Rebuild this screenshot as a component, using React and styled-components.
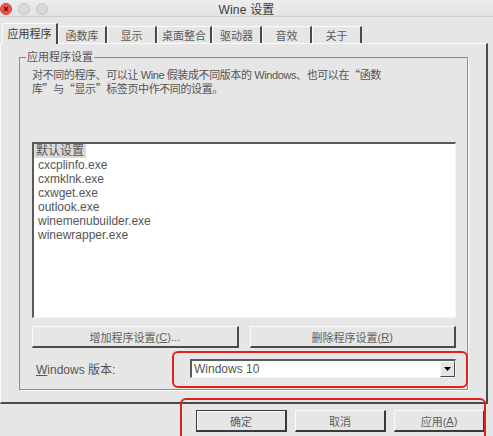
import styled, { createGlobalStyle } from "styled-components";

const FONT = `"Liberation Sans", "Noto Sans CJK SC", sans-serif`;

const GlobalStyle = createGlobalStyle`
  * { box-sizing: border-box; }
  body {
    margin: 0;
    background: #e6e6e6;
    font-family: ${FONT};
  }
`;

const tabs = [
  { label: "应用程序", w: 56, active: true },
  { label: "函数库", w: 49 },
  { label: "显示", w: 50 },
  { label: "桌面整合", w: 55 },
  { label: "驱动器", w: 50 },
  { label: "音效", w: 50 },
  { label: "关于", w: 50 },
];

const programs = [
  "默认设置",
  "cxcplinfo.exe",
  "cxmklnk.exe",
  "cxwget.exe",
  "outlook.exe",
  "winemenubuilder.exe",
  "winewrapper.exe",
];

const App = () => {
  return (
    <Window>
      <GlobalStyle />
      <TitleBar>
        <Lights>
          <Light $close>
            <svg width="6" height="6" viewBox="0 0 6 6">
              <path d="M1 1 L5 5 M5 1 L1 5" stroke="#6b0f0a" strokeWidth="1.3" />
            </svg>
          </Light>
          <Light />
          <Light />
        </Lights>
        <Title>Wine 设置</Title>
      </TitleBar>

      <TabStrip>
        {tabs.map((t) => (
          <Tab key={t.label} $w={t.w} $active={t.active}>
            {t.label}
          </Tab>
        ))}
      </TabStrip>

      <Panel>
        <Group>
          <Legend>应用程序设置</Legend>
          <Description>
            对不同的程序、可以让 Wine 假装成不同版本的 Windows、也可以在<Q>“</Q>函数
            <br />
            库<Q>”</Q>与<Q>“</Q>显示<Q>”</Q>标签页中作不同的设置。
          </Description>
          <ListBox>
            {programs.map((p, i) => (
              <ListItem key={p} $selected={i === 0}>
                <span>{p}</span>
              </ListItem>
            ))}
          </ListBox>
          <ButtonRow>
            <Button>
              增加程序设置(<u>C</u>)...
            </Button>
            <Button>
              删除程序设置(<u>R</u>)
            </Button>
          </ButtonRow>
          <VersionRow>
            <Label>
              <u>W</u>indows 版本:
            </Label>
            <Combo>
              <ComboValue>Windows 10</ComboValue>
              <ComboArrow>
                <svg width="7" height="4" viewBox="0 0 7 4">
                  <path d="M0 0 H7 L3.5 4 Z" fill="#000" />
                </svg>
              </ComboArrow>
            </Combo>
          </VersionRow>
        </Group>
      </Panel>

      <Footer>
        <DialogButton $default>确定</DialogButton>
        <DialogButton>取消</DialogButton>
        <DialogButton>
          应用(<u>A</u>)
        </DialogButton>
      </Footer>

      <Highlight style={{ left: 172, top: 351, width: 296, height: 37 }} />
      <Highlight style={{ left: 180, top: 398, width: 306, height: 48 }} />
    </Window>
  );
};
export default App;

const Window = styled.div`
  position: relative;
  width: 493px;
  height: 436px;
  overflow: hidden;
  background: #e6e6e6;
  color: #555;
`;
const TitleBar = styled.div`
  display: grid;
  grid-template-columns: 1fr auto 1fr;
  align-items: center;
  height: 17px;
  background: linear-gradient(#ededed, #e3e3e3);
  border-bottom: 1px solid #cdcdcd;
`;
const Lights = styled.div`
  display: flex;
  align-items: center;
  gap: 6px;
`;
const Light = styled.span`
  display: flex;
  align-items: center;
  justify-content: center;
  width: 12px;
  height: 12px;
  border-radius: 50%;
  background: ${(p) => (p.$close ? "#f0554c" : "#d9d9d9")};
  border: 1px solid ${(p) => (p.$close ? "#d8403a" : "#c6c6c6")};
`;
const Title = styled.div`
  font-size: 12px;
  color: #3c3c3c;
  letter-spacing: 0.2px;
`;
const TabStrip = styled.div`
  display: flex;
  align-items: flex-end;
  height: 26px;
  padding-left: 2px;
`;
const Tab = styled.div`
  display: flex;
  align-items: center;
  justify-content: center;
  width: ${(p) => p.$w}px;
  height: ${(p) => (p.$active ? 21 : 17)}px;
  margin-bottom: ${(p) => (p.$active ? -1 : 0)}px;
  position: relative;
  z-index: ${(p) => (p.$active ? 1 : 0)};
  background: #e6e6e6;
  border-top: 1px solid #fbfbfb;
  border-left: 1px solid #fbfbfb;
  border-right: 2px solid #4a4a4a;
  font-size: 11px;
  color: ${(p) => (p.$active ? "#3a3a3a" : "#5a5a5a")};
  padding-bottom: ${(p) => (p.$active ? 2 : 0)}px;
`;
const Panel = styled.div`
  width: 488px;
  padding: 7px 18px 12px 18px;
  border-top: 1px solid #fbfbfb;
  border-left: 1px solid #fbfbfb;
  border-right: 2px solid #4a4a4a;
  border-bottom: 2px solid #4a4a4a;
`;
const Group = styled.fieldset`
  margin: 0;
  min-width: 0;
  padding: 4px 11px 11px 12px;
  border: 1px solid #8c8c8c;
  box-shadow: 1px 1px 0 #fbfbfb;
  display: flex;
  flex-direction: column;
`;
const Legend = styled.legend`
  margin-left: -6px;
  padding: 0 1px;
  font-size: 11px;
  line-height: 13px;
  color: #555;
`;
const Description = styled.div`
  height: 74px;
  font-size: 11px;
  line-height: 13px;
  letter-spacing: -0.4px;
  white-space: nowrap;
  color: #555;
`;
const Q = styled.span`
  font-family: "Noto Sans CJK SC", sans-serif;
`;
const ListBox = styled.div`
  height: 176px;
  background: #fff;
  border-top: 2px solid #5a5a5a;
  border-left: 2px solid #5a5a5a;
  border-right: 1px solid #f4f4f4;
  border-bottom: 1px solid #f4f4f4;
`;
const ListItem = styled.div`
  height: 14px;
  font-size: 12px;
  line-height: 14px;
  color: #555;
  padding-left: ${(p) => (p.$selected ? 0 : 2)}px;
  span {
    display: inline-block;
    padding: 0 2px;
    background: ${(p) => (p.$selected ? "#dadada" : "transparent")};
  }
`;
const ButtonRow = styled.div`
  display: flex;
  gap: 11px;
  margin-top: 8px;
`;
const Button = styled.div`
  flex: 1;
  height: 22px;
  display: flex;
  align-items: center;
  justify-content: center;
  font-size: 11px;
  color: #606060;
  background: #e6e6e6;
  border-top: 1px solid #fbfbfb;
  border-left: 1px solid #fbfbfb;
  border-right: 2px solid #4a4a4a;
  border-bottom: 2px solid #4a4a4a;
`;
const VersionRow = styled.div`
  display: flex;
  align-items: center;
  justify-content: space-between;
  margin-top: 11px;
`;
const Label = styled.div`
  padding-left: 4px;
  font-size: 12px;
  color: #555;
`;
const Combo = styled.div`
  display: flex;
  align-items: center;
  width: 266px;
  height: 19px;
  background: #fff;
  border-top: 2px solid #5a5a5a;
  border-left: 2px solid #5a5a5a;
  border-right: 1px solid #f4f4f4;
  border-bottom: 1px solid #f4f4f4;
`;
const ComboValue = styled.div`
  flex: 1;
  padding-left: 2px;
  font-size: 12px;
  color: #555;
`;
const ComboArrow = styled.div`
  width: 15px;
  height: 16px;
  display: flex;
  align-items: center;
  justify-content: center;
  background: #e6e6e6;
  border-top: 1px solid #fbfbfb;
  border-left: 1px solid #fbfbfb;
  border-right: 1px solid #4a4a4a;
  border-bottom: 1px solid #4a4a4a;
`;
const Footer = styled.div`
  display: flex;
  justify-content: flex-end;
  gap: 8px;
  padding: 6px 8px 0 0;
`;
const DialogButton = styled.div`
  width: 91px;
  height: 22px;
  display: flex;
  align-items: center;
  justify-content: center;
  font-size: 11px;
  color: #606060;
  background: #e6e6e6;
  border-top: 1px solid ${(p) => (p.$default ? "#3a3a3a" : "#fbfbfb")};
  border-left: 1px solid ${(p) => (p.$default ? "#3a3a3a" : "#fbfbfb")};
  border-right: 2px solid #3a3a3a;
  border-bottom: 2px solid #3a3a3a;
  box-shadow: ${(p) => (p.$default ? "inset 1px 1px 0 #fbfbfb" : "none")};
`;
const Highlight = styled.div`
  position: absolute;
  border: 2px solid #e0211d;
  border-radius: 6px;
  pointer-events: none;
`;
